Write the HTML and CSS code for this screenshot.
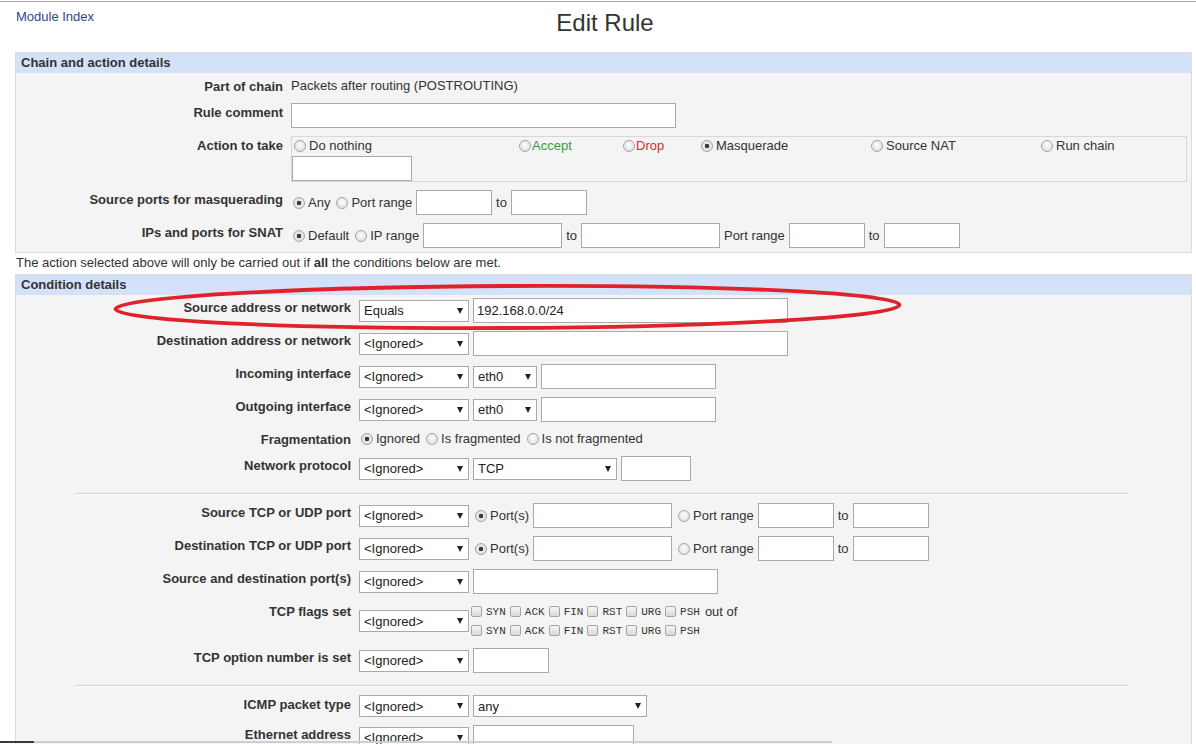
FILE: index.html
```html
<!DOCTYPE html>
<html>
<head>
	<meta charset="UTF-8">
	<title>Edit Rule</title>
	<link rel="stylesheet" href="styles.css">
</head>
<body>
	<div class="page">
		<div class="header">
			<a class="modlink" href="#">Module Index</a>
			<h1 class="title">Edit Rule</h1>
			<span></span>
		</div>

		<div class="panel">
			<div class="panel-head">Chain and action details</div>
			<div class="form form-chain">
				<div class="lbl">Part of chain</div>
				<div class="val">Packets after routing (POSTROUTING)</div>

				<div class="lbl">Rule comment</div>
				<div class="val"><input type="text" class="txt w385"></div>

				<div class="lbl">Action to take</div>
				<div class="val">
					<div class="actbox">
						<label class="opt"><input type="radio" class="radio" name="act">Do nothing</label>
						<label class="opt tight"><input type="radio" class="radio" name="act"><span class="green">Accept</span></label>
						<label class="opt tight"><input type="radio" class="radio" name="act"><span class="red">Drop</span></label>
						<label class="opt"><input type="radio" class="radio" name="act" checked>Masquerade</label>
						<label class="opt"><input type="radio" class="radio" name="act">Source NAT</label>
						<label class="opt"><input type="radio" class="radio" name="act">Run chain</label>
						<input type="text" class="txt w120">
					</div>
				</div>

				<div class="lbl">Source ports for masquerading</div>
				<div class="val">
					<label class="opt"><input type="radio" class="radio" name="mport" checked>Any</label>
					<label class="opt"><input type="radio" class="radio" name="mport">Port range</label>
					<input type="text" class="txt w76">
					<span>to</span>
					<input type="text" class="txt w76">
				</div>

				<div class="lbl">IPs and ports for SNAT</div>
				<div class="val">
					<label class="opt"><input type="radio" class="radio" name="snat" checked>Default</label>
					<label class="opt"><input type="radio" class="radio" name="snat">IP range</label>
					<input type="text" class="txt w139">
					<span>to</span>
					<input type="text" class="txt w139">
					<span>Port range</span>
					<input type="text" class="txt w76">
					<span>to</span>
					<input type="text" class="txt w76">
				</div>
			</div>
		</div>

		<p class="note">The action selected above will only be carried out if <b>all</b> the conditions below are met.</p>

		<div class="panel">
			<div class="panel-head">Condition details</div>
			<div class="form form-cond">
				<div class="lbl">Source address or network</div>
				<div class="val">
					<span class="sel"><select><option>Equals</option></select></span>
					<input type="text" class="txt w315" value="192.168.0.0/24">
				</div>

				<div class="lbl">Destination address or network</div>
				<div class="val">
					<span class="sel"><select><option>&lt;Ignored&gt;</option></select></span>
					<input type="text" class="txt w315">
				</div>

				<div class="lbl">Incoming interface</div>
				<div class="val">
					<span class="sel"><select><option>&lt;Ignored&gt;</option></select></span>
					<span class="sel sel-eth"><select><option>eth0</option></select></span>
					<input type="text" class="txt w175">
				</div>

				<div class="lbl">Outgoing interface</div>
				<div class="val">
					<span class="sel"><select><option>&lt;Ignored&gt;</option></select></span>
					<span class="sel sel-eth"><select><option>eth0</option></select></span>
					<input type="text" class="txt w175">
				</div>

				<div class="lbl">Fragmentation</div>
				<div class="val">
					<label class="opt"><input type="radio" class="radio" name="frag" checked>Ignored</label>
					<label class="opt"><input type="radio" class="radio" name="frag">Is fragmented</label>
					<label class="opt"><input type="radio" class="radio" name="frag">Is not fragmented</label>
				</div>

				<div class="lbl">Network protocol</div>
				<div class="val">
					<span class="sel"><select><option>&lt;Ignored&gt;</option></select></span>
					<span class="sel sel-proto"><select><option>TCP</option></select></span>
					<input type="text" class="txt w70">
				</div>

				<hr class="sep">

				<div class="lbl">Source TCP or UDP port</div>
				<div class="val">
					<span class="sel"><select><option>&lt;Ignored&gt;</option></select></span>
					<label class="opt"><input type="radio" class="radio" name="sport" checked>Port(s)</label>
					<input type="text" class="txt w139">
					<label class="opt"><input type="radio" class="radio" name="sport">Port range</label>
					<input type="text" class="txt w76">
					<span>to</span>
					<input type="text" class="txt w76">
				</div>

				<div class="lbl">Destination TCP or UDP port</div>
				<div class="val">
					<span class="sel"><select><option>&lt;Ignored&gt;</option></select></span>
					<label class="opt"><input type="radio" class="radio" name="dport" checked>Port(s)</label>
					<input type="text" class="txt w139">
					<label class="opt"><input type="radio" class="radio" name="dport">Port range</label>
					<input type="text" class="txt w76">
					<span>to</span>
					<input type="text" class="txt w76">
				</div>

				<div class="lbl">Source and destination port(s)</div>
				<div class="val">
					<span class="sel"><select><option>&lt;Ignored&gt;</option></select></span>
					<input type="text" class="txt w245">
				</div>

				<div class="lbl">TCP flags set</div>
				<div class="val">
					<span class="sel"><select><option>&lt;Ignored&gt;</option></select></span>
					<div class="flags">
						<div class="flagline">
							<label class="flag"><input type="checkbox" class="check"><tt>SYN</tt></label>
							<label class="flag"><input type="checkbox" class="check"><tt>ACK</tt></label>
							<label class="flag"><input type="checkbox" class="check"><tt>FIN</tt></label>
							<label class="flag"><input type="checkbox" class="check"><tt>RST</tt></label>
							<label class="flag"><input type="checkbox" class="check"><tt>URG</tt></label>
							<label class="flag"><input type="checkbox" class="check"><tt>PSH</tt></label>
							<span class="outof">out of</span>
						</div>
						<div class="flagline">
							<label class="flag"><input type="checkbox" class="check"><tt>SYN</tt></label>
							<label class="flag"><input type="checkbox" class="check"><tt>ACK</tt></label>
							<label class="flag"><input type="checkbox" class="check"><tt>FIN</tt></label>
							<label class="flag"><input type="checkbox" class="check"><tt>RST</tt></label>
							<label class="flag"><input type="checkbox" class="check"><tt>URG</tt></label>
							<label class="flag"><input type="checkbox" class="check"><tt>PSH</tt></label>
						</div>
					</div>
				</div>

				<div class="lbl">TCP option number is set</div>
				<div class="val">
					<span class="sel"><select><option>&lt;Ignored&gt;</option></select></span>
					<input type="text" class="txt w76">
				</div>

				<hr class="sep">

				<div class="lbl">ICMP packet type</div>
				<div class="val">
					<span class="sel"><select><option>&lt;Ignored&gt;</option></select></span>
					<span class="sel sel-icmp"><select><option>any</option></select></span>
				</div>

				<div class="lbl">Ethernet address</div>
				<div class="val">
					<span class="sel"><select><option>&lt;Ignored&gt;</option></select></span>
					<input type="text" class="txt w161">
				</div>
			</div>
		</div>
	</div>

	<!-- red marker drawn over the source address row -->
	<svg class="mark" width="800" height="56" viewBox="0 0 800 56">
		<ellipse cx="399.5" cy="27" rx="392" ry="21" fill="none" stroke="#e2222b" stroke-width="3.8" transform="rotate(-0.3 399.5 27)"/>
	</svg>
	<div class="hscroll"></div>
</body>
</html>
```

FILE: styles.css
```css
*{
	margin: 0;
	padding: 0;
	box-sizing: border-box;
}
html, body{
	height: 100%;
	overflow: hidden;
}
body{
	background: #fff;
	color: #333;
	font: 13px "Liberation Sans", Arial, sans-serif;
	padding-top: 1px;
}
.page{
	border-top: 1px solid #a8a8a8;
	padding: 0 4px 0 15px;
}

/* header */
.header{
	display: grid;
	grid-template-columns: 1fr auto 1fr;
	height: 50px;
	padding-top: 7px;
}
.modlink{
	color: #32468c;
	text-decoration: none;
	line-height: 16px;
	padding-left: 1px;
}
.title{
	font-size: 24px;
	font-weight: normal;
	line-height: 28px;
	color: #333;
	padding-left: 3px;
}

/* panels */
.panel{
	border: 1px solid #dcdcdc;
	background: #f4f4f4;
}
.panel-head{
	background: #d3e1f9;
	font-weight: bold;
	line-height: 20px;
	padding-left: 5px;
}
.form{
	display: grid;
	column-gap: 8px;
	row-gap: 8px;
	align-items: start;
}
.form-chain{
	grid-template-columns: 267px 1fr;
	padding: 4px 4px 4px 0;
}
.form-cond{
	grid-template-columns: 335px 1fr;
	padding: 3px 4px 4px 0;
}
.lbl{
	text-align: right;
	font-weight: bold;
	line-height: 17px;
	padding-top: 1px;
}
.val{
	display: flex;
	align-items: center;
	gap: 4px;
	min-height: 18px;
	line-height: 18px;
}
.sep{
	grid-column: 1 / -1;
	width: 90%;
	margin: 4px auto 0;
	border: none;
	border-top: 1px solid #d2d2d2;
	border-bottom: 1px solid #fbfbfb;
}
.note{
	line-height: 18px;
	padding-left: 1px;
	margin: 1px 0 2px;
}

/* action box */
.actbox{
	flex: 1;
	display: grid;
	grid-template-columns: 225px 104px 78px 170px 170px 1fr;
	row-gap: 1px;
	border: 1px solid #d8d8d8;
	padding: 0;
}
.green{
	color: #3a9a3a;
}
.red{
	color: #dc2a2a;
}

/* controls */
.opt{
	display: inline-flex;
	align-items: center;
	gap: 3px;
	white-space: nowrap;
}
.opt.tight{
	gap: 1px;
}
.radio{
	appearance: none;
	flex: none;
	width: 12px;
	height: 12px;
	margin: 0 0 0 2px;
	border: 1px solid #a4a4a4;
	border-radius: 50%;
	background: radial-gradient(circle at 50% 40%, #fdfdfd, #dadada);
}
.radio:checked{
	background: radial-gradient(circle, #3a3a3a 0 2px, #ececec 2.6px, #d6d6d6);
}
.check{
	appearance: none;
	flex: none;
	width: 11px;
	height: 11px;
	margin: 0;
	border: 1px solid #a4a4a4;
	border-radius: 2px;
	background: linear-gradient(#f6f6f6, #d8d8d8);
}
.txt{
	height: 25px;
	border: 1px solid #a9a9a9;
	background: #fff;
	color: #222;
	font: 13px "Liberation Sans", Arial, sans-serif;
	padding: 0 3px;
	border-radius: 0;
	outline: none;
}
.w70{ width: 70px; }
.w76{ width: 76px; }
.w120{ width: 120px; }
.w139{ width: 139px; }
.w161{ width: 161px; }
.w175{ width: 175px; }
.w245{ width: 245px; }
.w315{ width: 315px; }
.w385{ width: 385px; }

.sel{
	position: relative;
	display: inline-block;
	flex: none;
	width: 110px;
	height: 22px;
}
.sel select{
	appearance: none;
	display: block;
	width: 100%;
	height: 22px;
	border: 1px solid #a9a9a9;
	border-radius: 0;
	background: #fff;
	color: #222;
	font: 13px "Liberation Sans", Arial, sans-serif;
	padding: 0 16px 0 4px;
	outline: none;
}
.sel::after{
	content: "";
	position: absolute;
	right: 6px;
	top: 8px;
	border-left: 3.5px solid transparent;
	border-right: 3.5px solid transparent;
	border-top: 6px solid #222;
	pointer-events: none;
}
.sel-eth{ width: 64px; }
.sel-proto{ width: 144px; }
.sel-icmp{ width: 174px; }

/* tcp flags */
.flags{
	margin-left: -2px;
}
.flagline{
	display: flex;
	align-items: center;
	gap: 4px;
	height: 19px;
}
.flag{
	display: inline-flex;
	align-items: center;
	gap: 4px;
}
.flag tt{
	font: 11px "Liberation Mono", "DejaVu Sans Mono", monospace;
	color: #333;
}
.outof{
	margin-left: 1px;
}

/* overlays */
.mark{
	position: absolute;
	left: 108px;
	top: 280px;
}
.hscroll{
	position: fixed;
	left: 0;
	bottom: 1px;
	width: 832px;
	height: 2px;
	background: linear-gradient(to right, #3a3a3a 0 34px, #cfcfcf 34px);
}
```
